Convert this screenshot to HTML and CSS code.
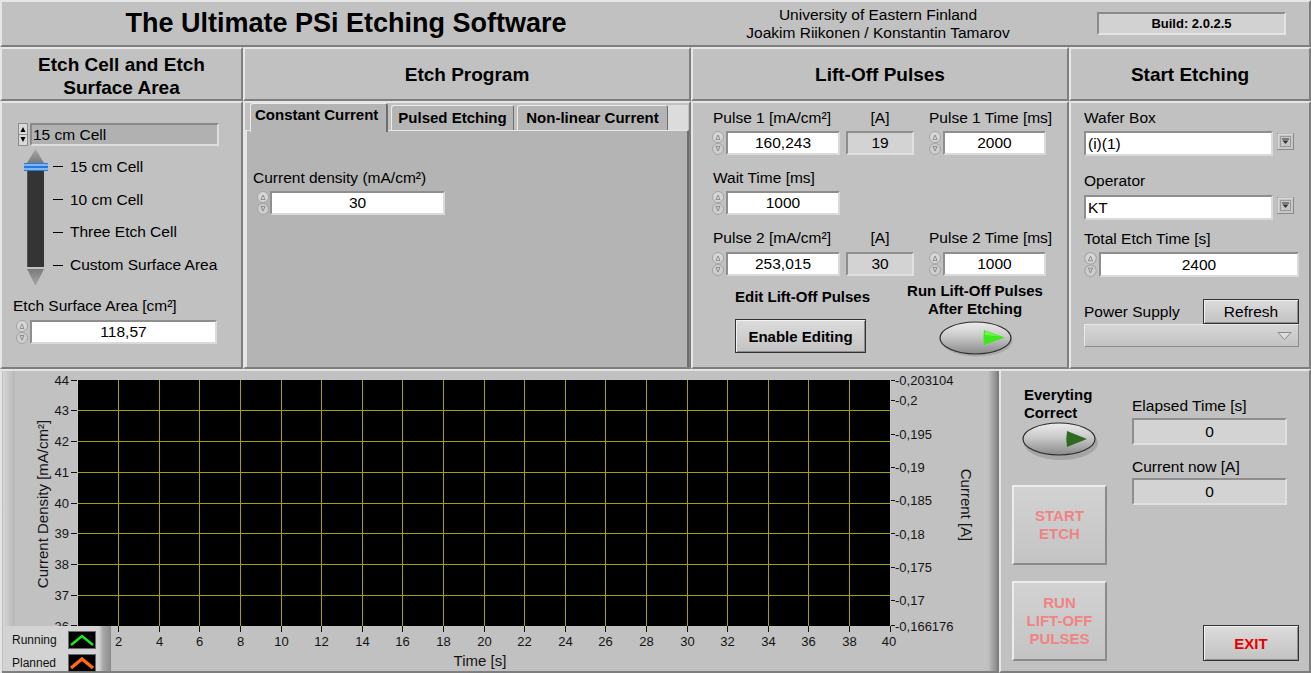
FILE: index.html
```html
<!DOCTYPE html>
<html>
<head>
<meta charset="utf-8">
<title>The Ultimate PSi Etching Software</title>
<link rel="stylesheet" href="styles.css">
</head>
<body>
<div class="app">
  <header class="hdr raised">
    <div class="title">The Ultimate PSi Etching Software</div>
    <div class="univ">University of Eastern Finland<br>Joakim Riikonen / Konstantin Tamarov</div>
    <div class="build">Build: 2.0.2.5</div>
  </header>

  <div class="sections">
    <div class="sec-h sec-h1 raised">Etch Cell and Etch<br>Surface Area</div>
    <div class="sec-h raised">Etch Program</div>
    <div class="sec-h raised">Lift-Off Pulses</div>
    <div class="sec-h raised">Start Etching</div>

    <!-- Etch cell -->
    <div class="raised cell-body">
      <div class="ring">
        <svg class="ring-arr" width="10" height="23" viewBox="0 0 10 23"><rect x="0.5" y="0.5" width="9" height="22" fill="#d9d9d9" stroke="#8c8c8c"/><line x1="1" y1="11.5" x2="9" y2="11.5" stroke="#8c8c8c"/><path d="M2.5 9 L5 4 L7.5 9 Z M2.5 14 L5 19 L7.5 14 Z" fill="#000"/></svg>
        <div class="ring-field">15 cm Cell</div>
      </div>
      <div class="slider">
        <svg class="slider-svg" width="26" height="140" viewBox="0 0 26 140">
          <defs>
            <linearGradient id="triU" x1="0" y1="0" x2="0" y2="1"><stop offset="0" stop-color="#a8a8a8"/><stop offset="1" stop-color="#7a7a7a"/></linearGradient>
            <linearGradient id="triD" x1="0" y1="0" x2="0" y2="1"><stop offset="0" stop-color="#7a7a7a"/><stop offset="1" stop-color="#a8a8a8"/></linearGradient>
          </defs>
          <path d="M12.5 1 L21 15 L4 15 Z" fill="url(#triU)"/>
          <rect x="4" y="17" width="17" height="102" fill="#343434"/>
          <rect x="4" y="17" width="1" height="102" fill="#555"/>
          <path d="M4 121 L21 121 L12.5 138 Z" fill="url(#triD)"/>
          <rect x="1" y="15" width="24" height="8" fill="#2b77d9"/>
          <rect x="1" y="16" width="24" height="2" fill="#7fb6f5"/>
          <rect x="1" y="20" width="24" height="2" fill="#7fb6f5"/>
        </svg>
        <div class="ticks">
          <div class="tick"><span class="dash"></span>15 cm Cell</div>
          <div class="tick"><span class="dash"></span>10 cm Cell</div>
          <div class="tick"><span class="dash"></span>Three Etch Cell</div>
          <div class="tick"><span class="dash"></span>Custom Surface Area</div>
        </div>
      </div>
      <div class="lbl lbl-area">Etch Surface Area [cm²]</div>
      <div class="num num-area">
        <svg class="spin" width="12" height="24" viewBox="0 0 12 24"><rect x="0.5" y="0.5" width="11" height="11" rx="5.5" fill="#d6d6d6" stroke="#a3a3a3"/><rect x="0.5" y="12.5" width="11" height="11" rx="5.5" fill="#cdcdcd" stroke="#a3a3a3"/><path d="M4 8.5 L6 4 L8 8.5 Z M4 15.5 L6 20 L8 15.5 Z" fill="none" stroke="#7d7d7d" stroke-width="0.8"/></svg>
        <div class="field f-area">118,57</div>
      </div>
    </div>

    <!-- Etch program -->
    <div class="raised prog-body">
      <div class="tabs">
        <div class="tab active t1">Constant Current</div>
        <div class="tab t2">Pulsed Etching</div>
        <div class="tab t3">Non-linear Current</div>
        <div class="tab-fill"></div>
      </div>
      <div class="tab-body">
        <div class="lbl">Current density (mA/cm²)</div>
        <div class="num num-cd">
          <svg class="spin" width="12" height="24" viewBox="0 0 12 24"><rect x="0.5" y="0.5" width="11" height="11" rx="5.5" fill="#d6d6d6" stroke="#a3a3a3"/><rect x="0.5" y="12.5" width="11" height="11" rx="5.5" fill="#cdcdcd" stroke="#a3a3a3"/><path d="M4 8.5 L6 4 L8 8.5 Z M4 15.5 L6 20 L8 15.5 Z" fill="none" stroke="#7d7d7d" stroke-width="0.8"/></svg>
          <div class="field f-cd">30</div>
        </div>
      </div>
    </div>

    <!-- Lift-off pulses -->
    <div class="raised lift-body">
      <div class="lrow">
        <div class="lbl wA la">Pulse 1 [mA/cm²]</div>
        <div class="lbl wB lb">[A]</div>
        <div class="lbl">Pulse 1 Time [ms]</div>
      </div>
      <div class="lrow irow">
        <div class="num wA">
          <svg class="spin" width="12" height="24" viewBox="0 0 12 24"><rect x="0.5" y="0.5" width="11" height="11" rx="5.5" fill="#d6d6d6" stroke="#a3a3a3"/><rect x="0.5" y="12.5" width="11" height="11" rx="5.5" fill="#cdcdcd" stroke="#a3a3a3"/><path d="M4 8.5 L6 4 L8 8.5 Z M4 15.5 L6 20 L8 15.5 Z" fill="none" stroke="#7d7d7d" stroke-width="0.8"/></svg>
          <div class="field f-p">160,243</div>
        </div>
        <div class="wB"><div class="ind i-a">19</div></div>
        <div class="num">
          <svg class="spin" width="12" height="24" viewBox="0 0 12 24"><rect x="0.5" y="0.5" width="11" height="11" rx="5.5" fill="#d6d6d6" stroke="#a3a3a3"/><rect x="0.5" y="12.5" width="11" height="11" rx="5.5" fill="#cdcdcd" stroke="#a3a3a3"/><path d="M4 8.5 L6 4 L8 8.5 Z M4 15.5 L6 20 L8 15.5 Z" fill="none" stroke="#7d7d7d" stroke-width="0.8"/></svg>
          <div class="field f-t">2000</div>
        </div>
      </div>
      <div class="lrow lrow-gap">
        <div class="lbl la">Wait Time [ms]</div>
      </div>
      <div class="lrow irow">
        <div class="num wA">
          <svg class="spin" width="12" height="24" viewBox="0 0 12 24"><rect x="0.5" y="0.5" width="11" height="11" rx="5.5" fill="#d6d6d6" stroke="#a3a3a3"/><rect x="0.5" y="12.5" width="11" height="11" rx="5.5" fill="#cdcdcd" stroke="#a3a3a3"/><path d="M4 8.5 L6 4 L8 8.5 Z M4 15.5 L6 20 L8 15.5 Z" fill="none" stroke="#7d7d7d" stroke-width="0.8"/></svg>
          <div class="field f-p">1000</div>
        </div>
      </div>
      <div class="lrow lrow-gap">
        <div class="lbl wA la">Pulse 2 [mA/cm²]</div>
        <div class="lbl wB lb">[A]</div>
        <div class="lbl">Pulse 2 Time [ms]</div>
      </div>
      <div class="lrow irow irow3">
        <div class="num wA">
          <svg class="spin" width="12" height="24" viewBox="0 0 12 24"><rect x="0.5" y="0.5" width="11" height="11" rx="5.5" fill="#d6d6d6" stroke="#a3a3a3"/><rect x="0.5" y="12.5" width="11" height="11" rx="5.5" fill="#cdcdcd" stroke="#a3a3a3"/><path d="M4 8.5 L6 4 L8 8.5 Z M4 15.5 L6 20 L8 15.5 Z" fill="none" stroke="#7d7d7d" stroke-width="0.8"/></svg>
          <div class="field f-p">253,015</div>
        </div>
        <div class="wB"><div class="ind i-a">30</div></div>
        <div class="num">
          <svg class="spin" width="12" height="24" viewBox="0 0 12 24"><rect x="0.5" y="0.5" width="11" height="11" rx="5.5" fill="#d6d6d6" stroke="#a3a3a3"/><rect x="0.5" y="12.5" width="11" height="11" rx="5.5" fill="#cdcdcd" stroke="#a3a3a3"/><path d="M4 8.5 L6 4 L8 8.5 Z M4 15.5 L6 20 L8 15.5 Z" fill="none" stroke="#7d7d7d" stroke-width="0.8"/></svg>
          <div class="field f-t">1000</div>
        </div>
      </div>
      <div class="lift-bottom">
        <div class="edit-col">
          <div class="blbl">Edit Lift-Off Pulses</div>
          <div class="btn btn-enable">Enable Editing</div>
        </div>
        <div class="run-col">
          <div class="blbl">Run Lift-Off Pulses<br>After Etching</div>
          <svg class="led" width="76" height="38" viewBox="0 0 76 38">
            <defs><linearGradient id="ledg1" x1="0" y1="0" x2="0" y2="1"><stop offset="0" stop-color="#ececec"/><stop offset="0.45" stop-color="#c9c9c9"/><stop offset="1" stop-color="#8a8a8a"/></linearGradient></defs>
            <ellipse cx="38" cy="20" rx="35.5" ry="15.5" fill="#8f8f8f" opacity="0.45"/>
            <ellipse cx="36.5" cy="17" rx="35.5" ry="16" fill="url(#ledg1)" stroke="#2b2b2b" stroke-width="1.2"/>
            <path d="M45 9 Q44 17 45 24 L66 16.5 Z" fill="#3ee81c"/>
            <path d="M46 10 L62 15.5 L46 14 Z" fill="#8dff6a" opacity="0.6"/>
          </svg>
        </div>
      </div>
    </div>

    <!-- Start etching -->
    <div class="raised start-body">
      <div class="lbl">Wafer Box</div>
      <div class="combo">
        <div class="field c-field">(i)(1)</div>
        <svg class="dd-btn" width="17" height="17" viewBox="0 0 17 17"><rect x="0.5" y="0.5" width="16" height="16" fill="#c6c6c6" stroke="#8a8a8a"/><path d="M1 16 V1 H16" fill="none" stroke="#ececec"/><rect x="3.5" y="3.5" width="10" height="10" fill="none" stroke="#9a9a9a"/><path d="M5 6 H12" stroke="#333"/><path d="M5.5 7.5 H11.5 L8.5 11 Z" fill="#333"/></svg>
      </div>
      <div class="lbl l-op">Operator</div>
      <div class="combo c-op">
        <div class="field c-field">KT</div>
        <svg class="dd-btn" width="17" height="17" viewBox="0 0 17 17"><rect x="0.5" y="0.5" width="16" height="16" fill="#c6c6c6" stroke="#8a8a8a"/><path d="M1 16 V1 H16" fill="none" stroke="#ececec"/><rect x="3.5" y="3.5" width="10" height="10" fill="none" stroke="#9a9a9a"/><path d="M5 6 H12" stroke="#333"/><path d="M5.5 7.5 H11.5 L8.5 11 Z" fill="#333"/></svg>
      </div>
      <div class="lbl l-tet">Total Etch Time [s]</div>
      <div class="num num-tet">
        <svg class="spin" width="13" height="25" viewBox="0 0 12 24"><rect x="0.5" y="0.5" width="11" height="11" rx="5.5" fill="#d6d6d6" stroke="#a3a3a3"/><rect x="0.5" y="12.5" width="11" height="11" rx="5.5" fill="#cdcdcd" stroke="#a3a3a3"/><path d="M4 8.5 L6 4 L8 8.5 Z M4 15.5 L6 20 L8 15.5 Z" fill="none" stroke="#7d7d7d" stroke-width="0.8"/></svg>
        <div class="field f-tet">2400</div>
      </div>
      <div class="ps-row">
        <div class="lbl ps-lbl">Power Supply</div>
        <div class="btn btn-refresh">Refresh</div>
      </div>
      <div class="ps-dd">
        <svg width="15" height="10" viewBox="0 0 15 10"><path d="M1 1.5 H14 L7.5 8.5 Z" fill="#dedede" stroke="#8a8a8a"/></svg>
      </div>
    </div>
  </div>

  <div class="bottom">
    <div class="chart">
      <svg class="plot" width="999" height="304" viewBox="0 0 999 304">
        <defs>
          <linearGradient id="railg" x1="0" y1="0" x2="1" y2="0"><stop offset="0" stop-color="#d4d4d4"/><stop offset="1" stop-color="#b7b7b7"/></linearGradient>
          <linearGradient id="redge" x1="0" y1="0" x2="1" y2="0"><stop offset="0" stop-color="#c0c0c0"/><stop offset="1" stop-color="#8a8a8a"/></linearGradient>
        </defs>
        <rect x="3" y="2" width="12" height="255" fill="url(#railg)"/>
        <rect x="988" y="2" width="9" height="300" fill="url(#redge)"/>
        <rect x="77" y="11" width="814" height="246" fill="#000"/>
        <path class="grid" d="M118.5 11V257M159.5 11V257M199.5 11V257M240.5 11V257M281.5 11V257M321.5 11V257M362.5 11V257M402.5 11V257M443.5 11V257M484.5 11V257M524.5 11V257M565.5 11V257M605.5 11V257M646.5 11V257M687.5 11V257M727.5 11V257M768.5 11V257M808.5 11V257M849.5 11V257M77 41.5H891M77 72.5H891M77 103.5H891M77 134.5H891M77 164.5H891M77 195.5H891M77 226.5H891"/>
        <path class="pframe" d="M77.5 11V257M890.5 11V257"/>
        <path class="tk" d="M71 11.5H77M71 41.5H77M71 72.5H77M71 103.5H77M71 134.5H77M71 164.5H77M71 195.5H77M71 226.5H77M71 256.5H77M891 11.5H895M891 31.5H895M891 65.5H895M891 98.5H895M891 131.5H895M891 164.5H895M891 198.5H895M891 231.5H895M891 256.5H895M118.5 257V263M159.5 257V263M199.5 257V263M240.5 257V263M281.5 257V263M321.5 257V263M362.5 257V263M402.5 257V263M443.5 257V263M484.5 257V263M524.5 257V263M565.5 257V263M605.5 257V263M646.5 257V263M687.5 257V263M727.5 257V263M768.5 257V263M808.5 257V263M849.5 257V263M890.5 257V263"/>
        <g class="ax" text-anchor="end">
          <text x="69" y="15.5">44</text><text x="69" y="46">43</text><text x="69" y="77">42</text><text x="69" y="108">41</text><text x="69" y="138.5">40</text><text x="69" y="169">39</text><text x="69" y="200">38</text><text x="69" y="231">37</text><text x="69" y="261.5">36</text>
        </g>
        <g class="ax">
          <text x="895" y="15.5">-0,203104</text><text x="895" y="36">-0,2</text><text x="895" y="69.5">-0,195</text><text x="895" y="103">-0,19</text><text x="895" y="136">-0,185</text><text x="895" y="169.5">-0,18</text><text x="895" y="202.5">-0,175</text><text x="895" y="236">-0,17</text><text x="895" y="261.5">-0,166176</text>
        </g>
        <g class="ax" text-anchor="middle">
          <text x="118.5" y="277">2</text><text x="159.5" y="277">4</text><text x="199.5" y="277">6</text><text x="240.5" y="277">8</text><text x="281.5" y="277">10</text><text x="321.5" y="277">12</text><text x="362.5" y="277">14</text><text x="402.5" y="277">16</text><text x="443.5" y="277">18</text><text x="484.5" y="277">20</text><text x="524.5" y="277">22</text><text x="565.5" y="277">24</text><text x="605.5" y="277">26</text><text x="646.5" y="277">28</text><text x="687.5" y="277">30</text><text x="727.5" y="277">32</text><text x="768.5" y="277">34</text><text x="808.5" y="277">36</text><text x="849.5" y="277">38</text><text x="889" y="277">40</text>
        </g>
        <text class="axt" x="480" y="297" text-anchor="middle">Time [s]</text>
        <text class="axt" transform="translate(48 135) rotate(-90)" text-anchor="middle">Current Density [mA/cm²]</text>
        <text class="axt" transform="translate(961 136) rotate(90)" text-anchor="middle">Current [A]</text>
      </svg>
      <div class="legend">
        <div class="leg-row">
          <span class="leg-name">Running</span>
          <svg width="28" height="18" viewBox="0 0 28 18"><rect x="0.5" y="0.5" width="27" height="17" fill="#000" stroke="#6a6a6a"/><path d="M3 14 L14 5 L25 14" fill="none" stroke="#19ec19" stroke-width="2.4"/></svg>
        </div>
        <div class="leg-row">
          <span class="leg-name">Planned</span>
          <svg width="28" height="18" viewBox="0 0 28 18"><rect x="0.5" y="0.5" width="27" height="17" fill="#000" stroke="#6a6a6a"/><path d="M3 14 L14 5 L25 14" fill="none" stroke="#ff6a12" stroke-width="3.4"/></svg>
        </div>
      </div>
    </div>

    <div class="raised run">
      <div class="run-left">
        <div class="blbl ev">Everyting<br>Correct</div>
        <svg class="led led2" width="78" height="40" viewBox="0 0 78 40">
          <defs><linearGradient id="ledg2" x1="0" y1="0" x2="0" y2="1"><stop offset="0" stop-color="#ececec"/><stop offset="0.45" stop-color="#c9c9c9"/><stop offset="1" stop-color="#8a8a8a"/></linearGradient></defs>
          <ellipse cx="39" cy="21" rx="37" ry="17" fill="#8a8a8a" opacity="0.5"/>
          <ellipse cx="37" cy="17" rx="36" ry="16" fill="url(#ledg2)" stroke="#2b2b2b" stroke-width="1.2"/>
          <path d="M45 9 Q43.5 17 45 25 L65 17 Z" fill="#2e6a22"/>
        </svg>
        <div class="btn3d btn-start">START<br>ETCH</div>
        <div class="btn3d btn-lift">RUN<br>LIFT-OFF<br>PULSES</div>
      </div>
      <div class="run-right">
        <div class="lbl r-l1">Elapsed Time [s]</div>
        <div class="ind r-ind">0</div>
        <div class="lbl r-l2">Current now [A]</div>
        <div class="ind r-ind r-ind2">0</div>
        <div class="btn btn-exit">EXIT</div>
      </div>
    </div>
  </div>
</div>
</body>
</html>
```

FILE: styles.css
```css
* { box-sizing: border-box; }

body {
  margin: 0;
  background: #c1c1c1;
  font-family: "Liberation Sans", Arial, sans-serif;
  color: #000;
}

.app {
  width: 1311px;
  height: 673px;
  overflow: hidden;
  display: flex;
  flex-direction: column;
}

.raised {
  border: 2px solid;
  border-color: #e6e6e6 #7e7e7e #7e7e7e #e6e6e6;
}

/* header */
.hdr {
  height: 47px;
  display: flex;
  align-items: center;
  flex: none;
}
.title {
  width: 688px;
  text-align: center;
  font-weight: bold;
  font-size: 27px;
}
.univ {
  width: 376px;
  text-align: center;
  font-size: 15.5px;
  line-height: 18px;
}
.build {
  margin-left: 31px;
  width: 189px;
  height: 23px;
  background: #d2d2d2;
  border: 2px solid;
  border-color: #8a8a8a #e4e4e4 #e4e4e4 #8a8a8a;
  font-weight: bold;
  font-size: 13px;
  display: flex;
  align-items: center;
  justify-content: center;
}

/* section grid */
.sections {
  display: grid;
  grid-template-columns: 243px 448px 378px 242px;
  grid-template-rows: 54px 268px;
  flex: none;
}
.sec-h {
  display: flex;
  align-items: center;
  justify-content: center;
  text-align: center;
  font-weight: bold;
  font-size: 19px;
  line-height: 23px;
  padding-top: 1px;
}
.sec-h1 { padding-top: 3px; }

.lbl {
  font-size: 15.5px;
  line-height: 18px;
  height: 18px;
  white-space: nowrap;
}
.blbl {
  font-size: 15px;
  font-weight: bold;
  line-height: 18px;
  white-space: nowrap;
}

.num {
  display: flex;
  align-items: center;
}
.spin { display: block; flex: none; }

.field {
  height: 24px;
  background: #fff;
  border: 2px solid;
  border-color: #8e8e8e #dadada #dadada #8e8e8e;
  font-size: 15.5px;
  line-height: 20px;
  text-align: center;
  white-space: nowrap;
}
.ind {
  height: 24px;
  background: #d3d3d3;
  border: 2px solid;
  border-color: #8e8e8e #e0e0e0 #e0e0e0 #8e8e8e;
  font-size: 15.5px;
  line-height: 20px;
  text-align: center;
}

/* etch cell */
.cell-body { padding: 20px 0 0 11px; }
.ring {
  display: flex;
  gap: 2px;
  margin-left: 5px;
  height: 23px;
}
.ring-arr { display: block; }
.ring-field {
  width: 189px;
  height: 23px;
  background: #b1b1b1;
  border: 2px solid;
  border-color: #8a8a8a #dedede #dedede #8a8a8a;
  font-size: 15.5px;
  line-height: 19px;
  padding-left: 1px;
}
.slider {
  display: flex;
  margin-top: 2px;
  margin-left: 10px;
  height: 140px;
}
.slider-svg { display: block; }
.ticks {
  margin-left: 4px;
  padding-top: 2.6px;
}
.tick {
  height: 32.7px;
  display: flex;
  align-items: center;
  font-size: 15.5px;
  white-space: nowrap;
}
.dash {
  width: 10px;
  height: 1px;
  background: #000;
  margin-right: 7px;
}
.lbl-area { margin-top: 9px; }
.num-area { margin-top: 5px; margin-left: 3px; gap: 2px; }
.f-area { width: 187px; }

/* etch program tabs */
.prog-body {
  display: flex;
  flex-direction: column;
}
.tabs {
  display: flex;
  align-items: flex-end;
  height: 27px;
  padding-left: 5px;
  flex: none;
}
.tab {
  height: 25px;
  background: #b4b4b4;
  border: 1px solid;
  border-bottom: none;
  border-color: #ececec #6e6e6e #6e6e6e #ececec;
  border-radius: 3px 3px 0 0;
  font-weight: bold;
  font-size: 15px;
  line-height: 18px;
  text-align: center;
  padding-top: 3px;
  margin-right: 3px;
  white-space: nowrap;
}
.tab.active {
  height: 29px;
  margin-bottom: -2px;
  padding-top: 2px;
  position: relative;
  border-right-width: 2px;
}
.t1 { width: 138px; text-align: left; padding-left: 4px; }
.t2 { width: 123px; }
.t3 { width: 151px; }
.tab-fill {
  flex: 1;
  height: 25px;
  margin-right: 1px;
  background: #dcdcdc;
  margin-left: -3px;
}
.tab-body {
  flex: 1;
  background: #b4b4b4;
  border: 1px solid;
  border-color: #e6e6e6 #6e6e6e #6e6e6e #e6e6e6;
  border-width: 1px 2px 0 2px;
  padding: 38px 0 0 6px;
}
.num-cd { margin-top: 4px; margin-left: 4px; gap: 1px; }
.f-cd { width: 175px; }

/* lift-off */
.lift-body { padding: 6px 0 0 19px; }
.lrow { display: flex; }
.wA { width: 134px; flex: none; }
.wB { width: 83px; flex: none; }
.la { padding-left: 1px; }
.lb { text-align: center; padding-right: 15px; }
.irow { margin-top: 4px; height: 24px; }
.irow3 { margin-top: 5px; }
.lrow-gap { margin-top: 14px; }
.irow .num { gap: 2px; }
.f-p { width: 114px; }
.f-t { width: 103px; }
.i-a { width: 68px; }

.lift-bottom { display: flex; }
.edit-col {
  width: 165px;
  margin-left: 23px;
  padding-top: 12px;
}
.btn {
  background: linear-gradient(#dcdcdc, #c2c2c2);
  border: 1px solid #333;
  box-shadow: inset 1px 1px 0 #f2f2f2, inset -1px -1px 0 #8e8e8e;
  display: flex;
  align-items: center;
  justify-content: center;
  white-space: nowrap;
}
.btn-enable {
  margin-top: 13px;
  width: 131px;
  height: 34px;
  font-weight: bold;
  font-size: 15px;
}
.run-col {
  width: 150px;
  padding-top: 6px;
  text-align: center;
  display: flex;
  flex-direction: column;
  align-items: center;
}
.led { display: block; margin-top: 3px; margin-left: 3px; }

/* start etching */
.start-body { padding: 6px 0 0 13px; }
.combo {
  display: flex;
  align-items: flex-start;
  margin-top: 4px;
}
.c-field {
  width: 189px;
  height: 25px;
  text-align: left;
  padding-left: 2px;
  line-height: 21px;
}
.dd-btn { display: block; margin-left: 4px; margin-top: 2px; }
.l-op { margin-top: 16px; }
.c-op { margin-top: 5px; }
.l-tet { margin-top: 10px; }
.num-tet { margin-top: 4px; gap: 2px; }
.f-tet { width: 200px; height: 25px; line-height: 21px; }
.ps-row {
  display: flex;
  align-items: center;
  margin-top: 22px;
}
.ps-lbl { width: 119px; }
.btn-refresh {
  width: 96px;
  height: 25px;
  font-size: 15.5px;
}
.ps-dd {
  width: 215px;
  height: 23px;
  background: linear-gradient(#d6d6d6, #c3c3c3);
  border: 1px solid;
  border-color: #e8e8e8 #8a8a8a #8a8a8a #e8e8e8;
  display: flex;
  align-items: center;
  justify-content: flex-end;
  padding-right: 6px;
}
.ps-dd svg { display: block; }

/* bottom */
.bottom {
  display: flex;
  height: 304px;
  flex: none;
}
.chart {
  width: 999px;
  height: 304px;
  position: relative;
  box-shadow: inset 2px 2px 0 #e4e4e4, inset -2px -2px 0 #7e7e7e;
}
.plot { display: block; }
.plot .grid { stroke: #a3a300; stroke-width: 1; fill: none; }
.plot .pframe { stroke: #c8c8c8; stroke-width: 1; fill: none; }
.plot .tk { stroke: #111; stroke-width: 1; fill: none; }
.plot .ax { font-size: 13px; fill: #141414; }
.plot .axt { font-size: 15px; fill: #141414; }

.legend {
  position: absolute;
  left: 3px;
  top: 257px;
  width: 108px;
  height: 45px;
  background: linear-gradient(to right, #d3d3d3 0, #d3d3d3 96px, #a8a8a8 100px, #8c8c8c 108px);
  padding: 2px 0 0 9px;
}
.leg-row {
  display: flex;
  align-items: center;
  height: 23px;
}
.leg-row svg { display: block; }
.leg-name {
  width: 56px;
  font-size: 12px;
  color: #111;
}

.run {
  width: 312px;
  height: 304px;
  display: flex;
  padding: 0 0 10px 11px;
}
.run-left {
  width: 95px;
  flex: none;
}
.ev { margin-top: 15px; margin-left: 12px; }
.led2 { margin-top: 0; margin-left: 10px; }
.btn3d {
  width: 95px;
  height: 80px;
  background: linear-gradient(#d2d2d2, #c4c4c4);
  border: 2px solid;
  border-color: #ececec #8a8a8a #8a8a8a #ececec;
  color: #f08484;
  font-weight: bold;
  font-size: 15px;
  line-height: 18px;
  text-align: center;
  display: flex;
  align-items: center;
  justify-content: center;
}
.btn-start { margin-top: 23px; }
.btn-lift { margin-top: 16px; }
.run-right {
  margin-left: 25px;
  width: 167px;
  display: flex;
  flex-direction: column;
  padding-top: 26px;
}
.r-ind { width: 155px; height: 27px; line-height: 23px; margin-top: 3px; }
.r-l2 { margin-top: 13px; }
.r-ind2 { margin-top: 2px; }
.btn-exit {
  margin-top: auto;
  align-self: flex-end;
  width: 96px;
  height: 36px;
  color: #e80000;
  font-weight: bold;
  font-size: 15px;
}
```
